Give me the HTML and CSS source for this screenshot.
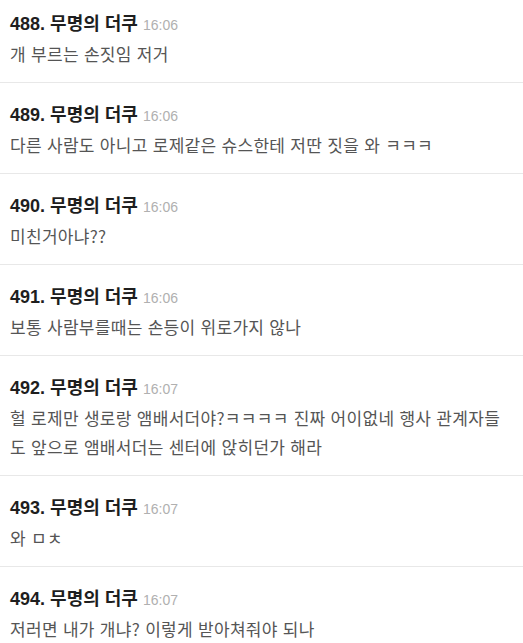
FILE: index.html
```html
<!DOCTYPE html>
<html lang="ko">
<head>
    <meta charset="UTF-8">
    <meta name="viewport" content="width=device-width, initial-scale=1.0">
    <title>댓글</title>
    <link rel="stylesheet" href="styles.css">
</head>
<body>
    <ul class="comments">
        <li class="comment">
            <div class="comment-head"><span class="num">488.</span> 무명의 더쿠 <span class="time">16:06</span></div>
            <p class="comment-body">개 부르는 손짓임 저거</p>
        </li>
        <li class="comment">
            <div class="comment-head"><span class="num">489.</span> 무명의 더쿠 <span class="time">16:06</span></div>
            <p class="comment-body">다른 사람도 아니고 로제같은 슈스한테 저딴 짓을 와 ㅋㅋㅋ</p>
        </li>
        <li class="comment">
            <div class="comment-head"><span class="num">490.</span> 무명의 더쿠 <span class="time">16:06</span></div>
            <p class="comment-body">미친거아냐??</p>
        </li>
        <li class="comment">
            <div class="comment-head"><span class="num">491.</span> 무명의 더쿠 <span class="time">16:06</span></div>
            <p class="comment-body">보통 사람부를때는 손등이 위로가지 않나</p>
        </li>
        <li class="comment">
            <div class="comment-head"><span class="num">492.</span> 무명의 더쿠 <span class="time">16:07</span></div>
            <p class="comment-body">헐 로제만 생로랑 앰배서더야?ㅋㅋㅋㅋ 진짜 어이없네 행사 관계자들 도 앞으로 앰배서더는 센터에 앉히던가 해라</p>
        </li>
        <li class="comment">
            <div class="comment-head"><span class="num">493.</span> 무명의 더쿠 <span class="time">16:07</span></div>
            <p class="comment-body">와 ㅁㅊ</p>
        </li>
        <li class="comment">
            <div class="comment-head"><span class="num">494.</span> 무명의 더쿠 <span class="time">16:07</span></div>
            <p class="comment-body">저러면 내가 개냐? 이렇게 받아쳐줘야 되나</p>
        </li>
    </ul>
</body>
</html>
```

FILE: styles.css
```css
body {
    margin: 0;
    background-color: #ffffff;
    font-family: "Noto Sans CJK KR", "Noto Sans", sans-serif;
    color: #222;
}

.comments {
    list-style: none;
    margin: 0;
    padding: 0;
}

.comment {
    padding: 17px 10px 14px;
    border-bottom: 1px solid #e8e8e8;
}

.comment:first-child {
    padding-top: 9px;
}

.comment-head {
    font-size: 18px;
    font-weight: bold;
    line-height: 26px;
    height: 26px;
    color: #1e1e1e;
}

.num {
    font-family: "Liberation Sans", "Noto Sans", sans-serif;
    line-height: 1;
}

.time {
    font-family: "Liberation Sans", sans-serif;
    font-size: 14px;
    font-weight: normal;
    line-height: 1;
    color: #b0b0b0;
}

.comment-body {
    margin: 4px 0 0;
    font-size: 17px;
    line-height: 29px;
    letter-spacing: 0.3px;
    color: #555;
}
```
